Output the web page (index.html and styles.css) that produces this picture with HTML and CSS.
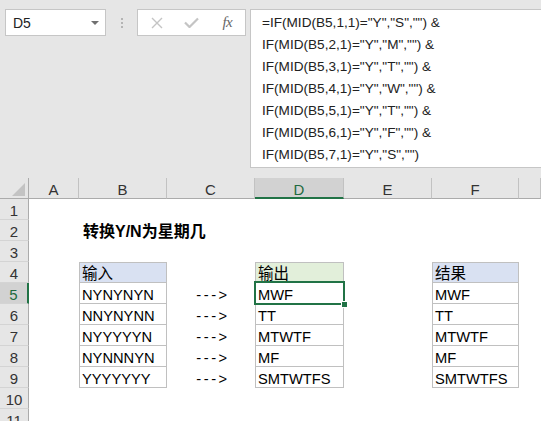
FILE: index.html
```html
<!DOCTYPE html>
<html lang="zh">
<head>
<meta charset="utf-8">
<title>转换Y/N为星期几</title>
<link rel="stylesheet" href="styles.css">
</head>
<body>
<div class="top">
  <div class="namebox"><span class="ref">D5</span><span class="caret"></span></div>
  <div class="dots"><i></i><i></i><i></i></div>
  <div class="fnbox">
    <span class="fbtn"><svg width="12" height="12" viewBox="0 0 12 12"><path d="M1 1L11 11M11 1L1 11" stroke="#c4c4c4" stroke-width="1.4" fill="none"/></svg></span>
    <span class="fbtn"><svg width="15" height="11" viewBox="0 0 15 11"><path d="M1 5.5L5.5 10L14 1.5" stroke="#c4c4c4" stroke-width="2.2" fill="none"/></svg></span>
    <span class="fbtn fx">fx</span>
  </div>
  <div class="formula">
    <div>=IF(MID(B5,1,1)="Y","S","") &amp;</div>
    <div>IF(MID(B5,2,1)="Y","M","") &amp;</div>
    <div>IF(MID(B5,3,1)="Y","T","") &amp;</div>
    <div>IF(MID(B5,4,1)="Y","W","") &amp;</div>
    <div>IF(MID(B5,5,1)="Y","T","") &amp;</div>
    <div>IF(MID(B5,6,1)="Y","F","") &amp;</div>
    <div>IF(MID(B5,7,1)="Y","S","")</div>
  </div>
</div>
<div class="sheet">
  <div class="ch corner"><span class="tri"></span></div>
  <div class="ch">A</div><div class="ch">B</div><div class="ch">C</div><div class="ch sel">D</div><div class="ch">E</div><div class="ch">F</div><div class="ch"></div>

  <div class="rh">1</div><div></div><div></div><div></div><div></div><div></div><div></div><div></div>
  <div class="rh">2</div><div></div><div class="c title">转换Y/N为星期几</div><div></div><div></div><div></div><div></div><div></div>
  <div class="rh">3</div><div></div><div></div><div></div><div></div><div></div><div></div><div></div>
  <div class="rh">4</div><div></div><div class="c t hd blue">输入</div><div></div><div class="c t hd green">输出</div><div></div><div class="c t hd blue">结果</div><div></div>
  <div class="rh rsel">5</div><div></div><div class="c t">NYNYNYN</div><div class="c arrow">---&gt;</div><div class="c t active">MWF<span class="handle"></span></div><div></div><div class="c t">MWF</div><div></div>
  <div class="rh">6</div><div></div><div class="c t">NNYNYNN</div><div class="c arrow">---&gt;</div><div class="c t">TT</div><div></div><div class="c t">TT</div><div></div>
  <div class="rh">7</div><div></div><div class="c t">NYYYYYN</div><div class="c arrow">---&gt;</div><div class="c t">MTWTF</div><div></div><div class="c t">MTWTF</div><div></div>
  <div class="rh">8</div><div></div><div class="c t">NYNNNYN</div><div class="c arrow">---&gt;</div><div class="c t">MF</div><div></div><div class="c t">MF</div><div></div>
  <div class="rh">9</div><div></div><div class="c t">YYYYYYY</div><div class="c arrow">---&gt;</div><div class="c t">SMTWTFS</div><div></div><div class="c t">SMTWTFS</div><div></div>
  <div class="rh">10</div><div></div><div></div><div></div><div></div><div></div><div></div><div></div>
  <div class="rh">11</div><div></div><div></div><div></div><div></div><div></div><div></div><div></div>
</div>
</body>
</html>
```

FILE: styles.css
```css
html, body {
  margin: 0;
  padding: 0;
}
body {
  width: 541px;
  height: 421px;
  overflow: hidden;
  background: #e6e6e6;
  font-family: "Liberation Sans", "Noto Sans CJK SC", sans-serif;
  color: #000;
}
.top {
  height: 178px;
  box-sizing: border-box;
  padding: 9px 0 0 5px;
  display: flex;
  align-items: flex-start;
}
.namebox {
  width: 101px;
  height: 27px;
  box-sizing: border-box;
  background: #fff;
  border: 1px solid #c6c6c6;
  display: flex;
  align-items: center;
  justify-content: space-between;
  padding: 0 6px 0 7px;
  font-size: 14px;
  color: #222;
}
.caret {
  width: 0;
  height: 0;
  border-left: 4px solid transparent;
  border-right: 4px solid transparent;
  border-top: 4px solid #707070;
}
.dots {
  width: 31px;
  height: 27px;
  display: flex;
  flex-direction: column;
  align-items: center;
  justify-content: center;
  gap: 2px;
}
.dots i {
  display: block;
  width: 2px;
  height: 2px;
  background: #b4b4b4;
}
.fnbox {
  width: 109px;
  height: 27px;
  box-sizing: border-box;
  background: #fff;
  border: 1px solid #c6c6c6;
  display: flex;
  align-items: center;
  padding-left: 1px;
}
.fbtn {
  width: 36px;
  display: flex;
  align-items: center;
  justify-content: center;
}
.fx {
  font-family: "Liberation Serif", serif;
  font-style: italic;
  font-size: 15px;
  color: #666;
  letter-spacing: -0.5px;
}
.formula {
  flex: 1;
  margin-left: 4px;
  margin-right: -2px;
  height: 159px;
  box-sizing: border-box;
  background: #fff;
  border: 1px solid #c6c6c6;
  padding: 2px 0 0 11px;
  font-size: 13.6px;
  line-height: 22px;
  color: #222;
  white-space: nowrap;
}
.sheet {
  display: grid;
  grid-template-columns: 29px 50px 88px 88px 89px 88px 87px 22px;
  grid-auto-rows: 21px;
  background: #fff;
}
.sheet > div {
  box-sizing: border-box;
  min-width: 0;
}
.ch {
  background: #e6e6e6;
  border-right: 1px solid #c2c2c2;
  border-bottom: 1px solid #ababab;
  font-size: 15px;
  line-height: 20px;
  padding-top: 2px;
  text-align: center;
  color: #333;
}
.ch.corner {
  position: relative;
  border-right: 1px solid #ababab;
}
.tri {
  position: absolute;
  right: 3px;
  bottom: 2px;
  width: 0;
  height: 0;
  border-left: 13px solid transparent;
  border-bottom: 13px solid #c3c3c3;
}
.ch.sel {
  background: #d2d2d2;
  border-bottom: 2px solid #217346;
  color: #1e6b40;
}
.rh {
  background: #e6e6e6;
  border-right: 1px solid #ababab;
  border-bottom: 1px solid #d4d4d4;
  font-size: 15px;
  line-height: 20px;
  padding-top: 2px;
  text-align: center;
  color: #333;
}
.rh.rsel {
  background: #d2d2d2;
  border-right: 2px solid #217346;
  color: #1e6b40;
}
.c {
  display: flex;
  align-items: flex-end;
  font-size: 14.7px;
  line-height: 14px;
  padding-left: 2px;
  padding-bottom: 2px;
  white-space: nowrap;
}
.t {
  border-left: 1px solid #c0c0c0;
  border-right: 1px solid #c0c0c0;
  border-bottom: 1px solid #c0c0c0;
  padding-bottom: 1px;
}
.hd {
  border-top: 1px solid #c0c0c0;
  font-size: 15.5px;
}
.blue {
  background: #d9e1f2;
}
.green {
  background: #e2efda;
}
.title {
  font-weight: bold;
  font-size: 16px;
  padding-left: 4px;
}
.arrow {
  justify-content: center;
  letter-spacing: 2.5px;
  padding-left: 4px;
}
.active {
  position: relative;
}
.active::before {
  content: "";
  position: absolute;
  left: -2px;
  top: -2px;
  right: -2px;
  bottom: -2px;
  border: 2px solid #217346;
  z-index: 1;
}
.handle {
  position: absolute;
  right: -5px;
  bottom: -5px;
  width: 5px;
  height: 5px;
  background: #217346;
  border: 1px solid #fff;
  z-index: 2;
}
```
